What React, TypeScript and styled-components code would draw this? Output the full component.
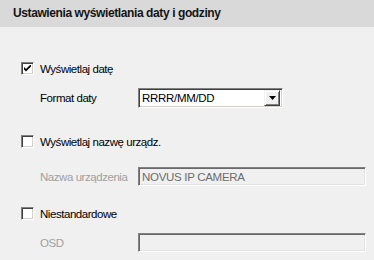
import styled, { createGlobalStyle } from 'styled-components';

const GlobalStyle = createGlobalStyle`
  html, body {
    margin: 0;
    padding: 0;
    background: #f0f0f0;
  }
  body {
    font-family: "Liberation Sans", Arial, sans-serif;
  }
`;

const Panel = styled.div`
  width: 374px;
  height: 260px;
  background: #f0f0f0;
  overflow: hidden;
`;

const Header = styled.div`
  height: 27px;
  background: #d9d9d9;
  padding-left: 13px;
  font-size: 12px;
  font-weight: bold;
  line-height: 27px;
  letter-spacing: -0.4px;
  color: #141414;
`;

const Body = styled.div`
  display: flex;
  flex-direction: column;
  padding-left: 21px;
`;

const CheckRow = styled.label<{ $top: number }>`
  display: flex;
  align-items: center;
  gap: 6px;
  height: 13px;
  margin-top: ${({ $top }) => $top}px;
  font-size: 11.5px;
  letter-spacing: -0.45px;
  color: #000;
`;

const Box = styled.span`
  box-sizing: border-box;
  width: 13px;
  height: 13px;
  background: #fff;
  border-top: 1px solid #808080;
  border-left: 1px solid #808080;
  border-right: 1px solid #ffffff;
  border-bottom: 1px solid #ffffff;
  box-shadow: inset 1px 1px 0 #404040, inset -1px -1px 0 #d4d0c8;
  display: flex;
  align-items: center;
  justify-content: center;
`;

const FieldRow = styled.div<{ $top: number }>`
  display: grid;
  grid-template-columns: 98px auto;
  align-items: center;
  margin-top: ${({ $top }) => $top}px;
  padding-left: 19px;
`;

const FieldLabel = styled.span<{ $disabled?: boolean }>`
  font-size: 11.5px;
  letter-spacing: -0.45px;
  color: ${({ $disabled }) => ($disabled ? '#a0a0a0' : '#000')};
`;

const Select = styled.div`
  box-sizing: border-box;
  width: 145px;
  height: 20px;
  background: #fff;
  border-top: 1px solid #808080;
  border-left: 1px solid #808080;
  border-right: 1px solid #ffffff;
  border-bottom: 1px solid #ffffff;
  box-shadow: inset 1px 1px 0 #404040, inset -1px -1px 0 #d4d0c8;
  display: flex;
  align-items: center;
  justify-content: space-between;
  padding: 2px;
  font-size: 11.5px;
  letter-spacing: -0.3px;
  color: #000;
`;

const SelectText = styled.span`
  padding-left: 1px;
`;

const DropButton = styled.span`
  box-sizing: border-box;
  width: 16px;
  height: 16px;
  background: #f0f0f0;
  border-top: 1px solid #f0f0f0;
  border-left: 1px solid #f0f0f0;
  border-right: 1px solid #404040;
  border-bottom: 1px solid #404040;
  box-shadow: inset 1px 1px 0 #ffffff, inset -1px -1px 0 #808080;
  display: flex;
  align-items: center;
  justify-content: center;
`;

const TextField = styled.div`
  box-sizing: border-box;
  width: 228px;
  height: 19px;
  background: #f0f0f0;
  border-top: 1px solid #808080;
  border-left: 1px solid #808080;
  border-right: 1px solid #ffffff;
  border-bottom: 1px solid #ffffff;
  box-shadow: inset 1px 1px 0 #696969, inset -1px -1px 0 #e3e3e3;
  display: flex;
  align-items: center;
  padding-left: 3px;
  font-size: 11.5px;
  letter-spacing: -0.3px;
  color: #6d6d6d;
`;

const Checkbox = ({ checked }: { checked?: boolean }) => (
  <Box>
    {checked && (
      <svg width="7" height="7" viewBox="0 0 7 7">
        <path d="M0 2 L0 4.5 L2 6.5 L7 1.5 L7 -1 L2 4 Z" fill="#000" />
      </svg>
    )}
  </Box>
);

export default function App() {
  return (
    <>
      <GlobalStyle />
      <Panel>
        <Header>Ustawienia wyświetlania daty i godziny</Header>
        <Body>
          <CheckRow $top={35}>
            <Checkbox checked />
            Wyświetlaj datę
          </CheckRow>
          <FieldRow $top={13}>
            <FieldLabel>Format daty</FieldLabel>
            <Select>
              <SelectText>RRRR/MM/DD</SelectText>
              <DropButton>
                <svg width="7" height="4" viewBox="0 0 7 4">
                  <path d="M0 0 H7 L3.5 4 Z" fill="#000" />
                </svg>
              </DropButton>
            </Select>
          </FieldRow>

          <CheckRow $top={27}>
            <Checkbox />
            Wyświetlaj nazwę urządz.
          </CheckRow>
          <FieldRow $top={19}>
            <FieldLabel $disabled>Nazwa urządzenia</FieldLabel>
            <TextField>NOVUS IP CAMERA</TextField>
          </FieldRow>

          <CheckRow $top={21}>
            <Checkbox />
            Niestandardowe
          </CheckRow>
          <FieldRow $top={13}>
            <FieldLabel $disabled>OSD</FieldLabel>
            <TextField />
          </FieldRow>
        </Body>
      </Panel>
    </>
  );
}
